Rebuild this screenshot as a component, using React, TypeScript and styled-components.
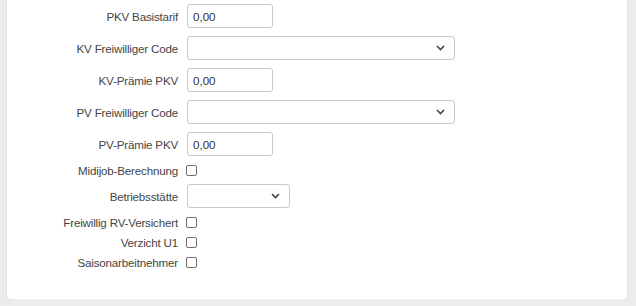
import styled, { createGlobalStyle } from "styled-components";

const GlobalStyle = createGlobalStyle`
    html, body {
        margin: 0;
        padding: 0;
        background-color: #ececec;
        font-family: "Liberation Sans", Arial, sans-serif;
    }
`;

const Card = styled.div`
    width: 620px;
    margin-left: 7px;
    padding-bottom: 27px;
    background-color: #ffffff;
    border-radius: 0 0 4px 4px;
    box-shadow: 0 1px 2px rgba(0, 0, 0, 0.12);
`;

const Row = styled.div<{ $check?: boolean }>`
    display: grid;
    grid-template-columns: 171px 1fr;
    column-gap: 9px;
    align-items: center;
    height: ${(p) => (p.$check ? "20px" : "24px")};
    padding: ${(p) => (p.$check ? "0" : "4px 0")};
`;

const Label = styled.label`
    text-align: right;
    font-size: 11.6px;
    letter-spacing: -0.18px;
    color: #444;
    white-space: nowrap;
`;

const TextInput = styled.input`
    box-sizing: border-box;
    width: 86px;
    height: 24px;
    padding: 0 5px;
    border: 1px solid #c8c8c8;
    border-radius: 3px;
    font-family: inherit;
    font-size: 11.6px;
    color: #333;
    outline: none;
`;

const SelectBox = styled.div<{ $width: number }>`
    box-sizing: border-box;
    display: flex;
    align-items: center;
    justify-content: flex-end;
    width: ${(p) => p.$width}px;
    height: 24px;
    padding-right: 9px;
    border: 1px solid #c8c8c8;
    border-radius: 3px;
    background: #fff;
`;

const Check = styled.input.attrs({ type: "checkbox" })`
    appearance: none;
    box-sizing: border-box;
    width: 11px;
    height: 11px;
    margin: 0 0 0 -1px;
    border: 1px solid #6f6f6f;
    border-radius: 2px;
    background: #fff;
`;

const Chevron = () => (
    <svg width="9" height="6" viewBox="0 0 9 6">
        <polyline points="1,1 4.5,4.5 8,1" fill="none" stroke="#444" strokeWidth="1.6" />
    </svg>
);

const Select = ({ width }: { width: number }) => (
    <SelectBox $width={width}>
        <Chevron />
    </SelectBox>
);

const App = () => {
    return (
        <>
            <GlobalStyle />
            <Card>
                <Row>
                    <Label>PKV Basistarif</Label>
                    <TextInput defaultValue="0,00" />
                </Row>
                <Row>
                    <Label>KV Freiwilliger Code</Label>
                    <Select width={268} />
                </Row>
                <Row>
                    <Label>KV-Prämie PKV</Label>
                    <TextInput defaultValue="0,00" />
                </Row>
                <Row>
                    <Label>PV Freiwilliger Code</Label>
                    <Select width={268} />
                </Row>
                <Row>
                    <Label>PV-Prämie PKV</Label>
                    <TextInput defaultValue="0,00" />
                </Row>
                <Row $check>
                    <Label>Midijob-Berechnung</Label>
                    <Check />
                </Row>
                <Row>
                    <Label>Betriebsstätte</Label>
                    <Select width={103} />
                </Row>
                <Row $check>
                    <Label>Freiwillig RV-Versichert</Label>
                    <Check />
                </Row>
                <Row $check>
                    <Label>Verzicht U1</Label>
                    <Check />
                </Row>
                <Row $check>
                    <Label>Saisonarbeitnehmer</Label>
                    <Check />
                </Row>
            </Card>
        </>
    );
};

export default App;
